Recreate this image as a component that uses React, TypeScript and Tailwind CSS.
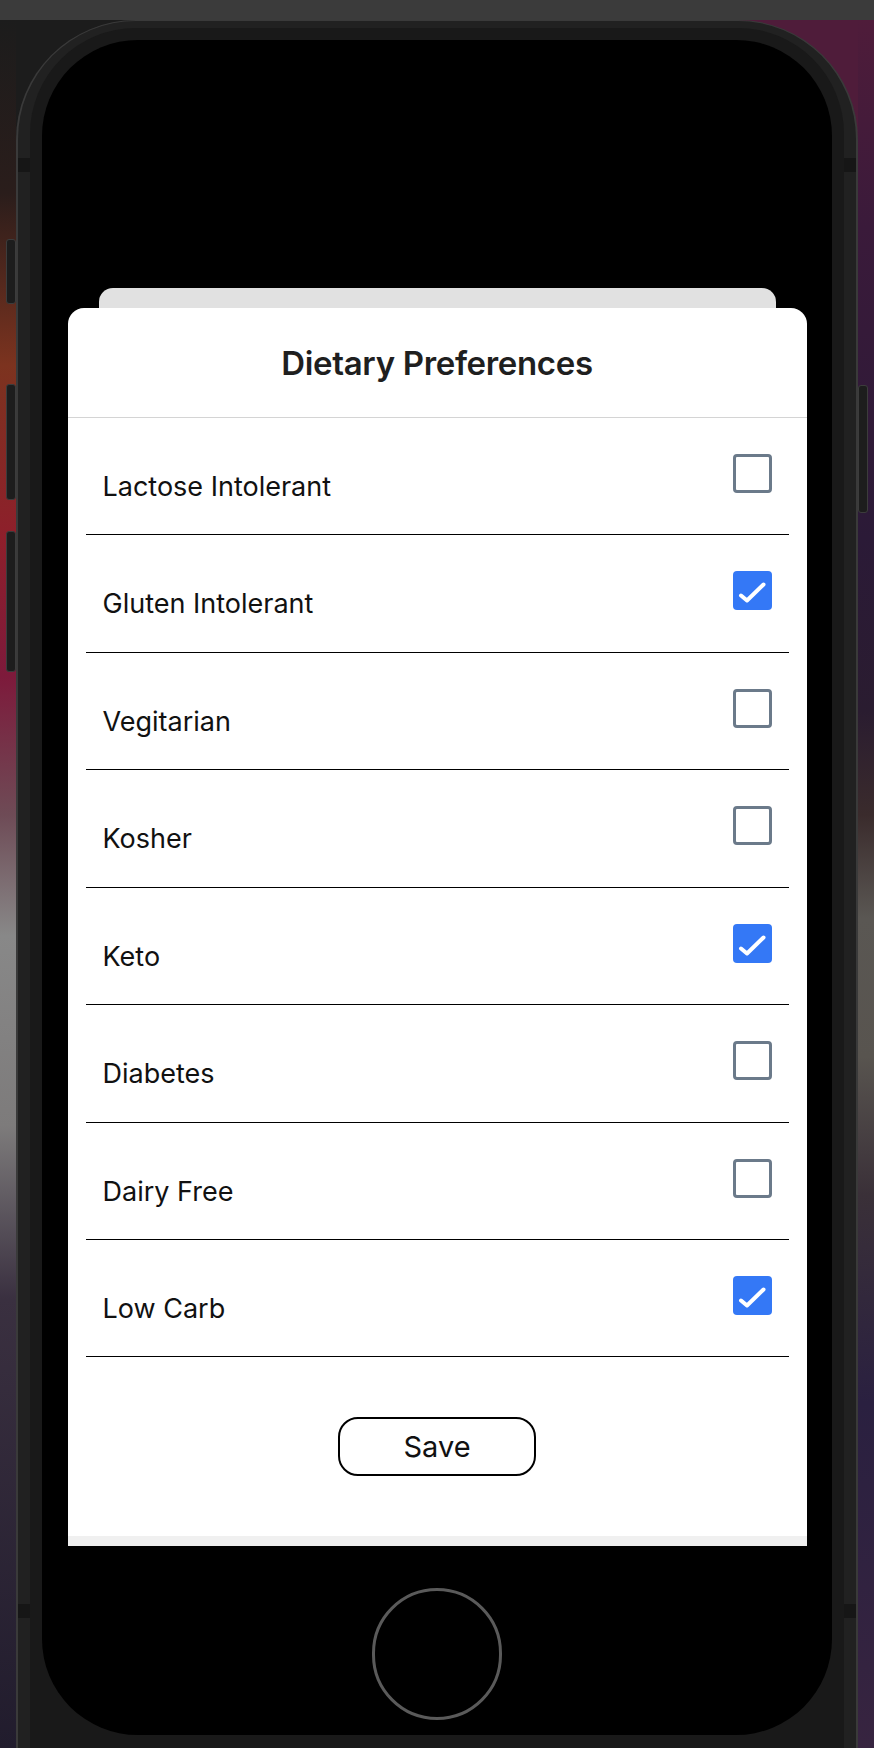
import React from "react";

type Pref = { label: string; checked: boolean };

const prefs: Pref[] = [
  { label: "Lactose Intolerant", checked: false },
  { label: "Gluten Intolerant", checked: true },
  { label: "Vegitarian", checked: false },
  { label: "Kosher", checked: false },
  { label: "Keto", checked: true },
  { label: "Diabetes", checked: false },
  { label: "Dairy Free", checked: false },
  { label: "Low Carb", checked: true },
];

function Checkbox({ checked }: { checked: boolean }) {
  if (checked) {
    return (
      <div className="h-[39px] w-[39px] rounded-[4px] bg-[#3478f6] flex items-center justify-center">
        <svg width="39" height="39" viewBox="0 0 39 39" fill="none">
          <path
            d="M8 24.5 L14 29.5 L30.5 13.5"
            stroke="white"
            strokeWidth="4"
            strokeLinecap="round"
            strokeLinejoin="round"
          />
        </svg>
      </div>
    );
  }
  return (
    <div className="h-[39px] w-[39px] rounded-[4px] border-[3px] border-[#6b7a8a] bg-white" />
  );
}

function Row({ pref }: { pref: Pref }) {
  return (
    <div className="mx-[18px] h-[117.43px] border-b border-black flex justify-between items-start px-[17px]">
      <span className="mt-[55px] text-[27px] leading-[27px] text-[#111]">
        {pref.label}
      </span>
      <div className="mt-[36px]">
        <Checkbox checked={pref.checked} />
      </div>
    </div>
  );
}

function SideButton({ className }: { className: string }) {
  return (
    <div
      className={
        "absolute w-[10px] rounded-[3px] border border-[#3c3c3c] bg-[#1d1d1d] " +
        className
      }
    />
  );
}

export default function App() {
  return (
    <div className="relative h-[1748px] w-[874px] overflow-hidden bg-[#1c1c1c] font-['Inter','Noto_Sans',sans-serif]">
      {/* simulator title bar */}
      <div className="h-[20px] bg-[#3b3b3b]" />

      <div className="flex bg-[linear-gradient(to_right,#1c1c1c_50%,#4f1c3a_50%)]">
        {/* wallpaper, left */}
        <div className="w-[16px] h-[1728px] bg-[linear-gradient(to_bottom,#1c1c1c_0%,#2a1d1b_10%,#7c331f_20%,#8e1f2b_30%,#7d1a3b_38%,#6e4b56_46%,#888_53%,#7d7b7b_64%,#3a3040_74%,#211c2d_100%)]" />

        {/* phone */}
        <div className="w-[842px] rounded-t-[120px] bg-[#3a3a3a] px-[2px] pt-[1px]">
          <div className="rounded-t-[118px] bg-[#212121] px-[12px] pt-[7px]">
            <div className="rounded-t-[106px] bg-[#191919] px-[12px] pt-[12px] pb-[14px]">
              <div className="h-[1695px] rounded-[96px] bg-black flex flex-col items-center">
                {/* card behind */}
                <div className="mt-[248px] h-[20px] w-[677px] rounded-t-[14px] bg-[#e1e1e1]" />

                {/* modal sheet */}
                <div className="w-[739px] rounded-t-[16px] bg-white flex flex-col">
                  <div className="h-[110px] border-b border-[#d4d4d4] flex items-center justify-center pt-[2px]">
                    <h1 className="text-[33px] leading-[33px] font-semibold text-[#1f1f1f] tracking-[-0.01em]">
                      Dietary Preferences
                    </h1>
                  </div>

                  {prefs.map((p) => (
                    <Row key={p.label} pref={p} />
                  ))}

                  <div className="h-[179px] flex items-center justify-center">
                    <button className="h-[59px] w-[198px] rounded-[20px] border-2 border-black bg-white text-[29px] leading-[29px] text-[#111]">
                      Save
                    </button>
                  </div>
                  <div className="h-[10px] bg-[#f0f0f0]" />
                </div>

                {/* home button */}
                <div className="mt-[42px] h-[132px] w-[130px] rounded-full border-[3px] border-[#5a5a5a]" />
              </div>
            </div>
          </div>
        </div>

        {/* wallpaper, right */}
        <div className="w-[16px] h-[1728px] bg-[linear-gradient(to_bottom,#4f1c3a_0%,#3a1a3a_12%,#2b1a37_30%,#2a1c30_40%,#3a2b2c_46%,#5a5753_52%,#58544f_60%,#3a3038_68%,#2a2040_80%,#372440_100%)]" />
      </div>

      {/* side buttons */}
      <SideButton className="left-[6px] top-[239px] h-[65px]" />
      <SideButton className="left-[6px] top-[384px] h-[116px]" />
      <SideButton className="left-[6px] top-[531px] h-[141px]" />
      <SideButton className="left-[858px] top-[385px] h-[128px]" />

      {/* antenna bands */}
      <div className="absolute left-[18px] top-[158px] h-[14px] w-[12px] bg-[#161616]" />
      <div className="absolute left-[844px] top-[158px] h-[14px] w-[12px] bg-[#161616]" />
      <div className="absolute left-[18px] top-[1604px] h-[14px] w-[12px] bg-[#161616]" />
      <div className="absolute left-[844px] top-[1604px] h-[14px] w-[12px] bg-[#161616]" />
    </div>
  );
}
